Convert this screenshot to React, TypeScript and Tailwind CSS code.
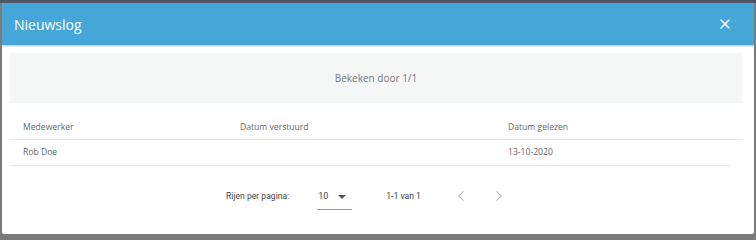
import { X, ChevronLeft, ChevronRight } from "lucide-react";

const rows = [{ name: "Rob Doe", sent: "", read: "13-10-2020" }];

export default function App() {
  return (
    <div className="w-[756px] h-[240px] bg-[#7b7b7b] flex flex-col" style={{ fontFamily: '"Open Sans", sans-serif' }}>
      <div className="h-[3px] bg-[#4b5864] shrink-0" />
      <div className="flex-1 flex pl-[2px]">
        <div className="w-[752px] h-[231px] bg-white rounded-[2px] overflow-hidden flex flex-col">
          {/* Header */}
          <div className="h-[42px] bg-[#45a6da] flex items-center justify-between pl-[12px] pr-[21px] shadow-[0_1px_2px_rgba(0,0,0,0.25)] relative z-10">
            <h2 className="text-white text-[14px]">Nieuwslog</h2>
            <X className="text-white w-[16px] h-[16px]" strokeWidth={2.2} />
          </div>

          <div className="px-[8px] pt-[8px]">
            <div className="h-[50px] w-[732px] bg-[#f5f6f6] flex items-center justify-center text-[10px] text-[#777b7e]">
              Bekeken door 1/1
            </div>

            {/* Table */}
            <div className="w-[732px] text-[8.6px] text-[#666]">
              <div className="grid grid-cols-[217px_268px_1fr] h-[37px] items-center pt-[12px] border-b border-[#e4e4e4] pl-[13px]">
                <span>Medewerker</span>
                <span>Datum verstuurd</span>
                <span>Datum gelezen</span>
              </div>
              {rows.map((r, i) => (
                <div key={i} className="grid grid-cols-[217px_268px_1fr] h-[26px] items-center border-b border-[#e4e4e4] w-[720px] pl-[13px]">
                  <span>{r.name}</span>
                  <span>{r.sent}</span>
                  <span>{r.read}</span>
                </div>
              ))}
            </div>
          </div>

          {/* Pagination */}
          <div className="flex items-center h-[60px] pl-[224px] text-[8.6px] text-[#444]" style={{ fontFamily: "Roboto, sans-serif" }}>
            <span>Rijen per pagina:</span>
            <div className="ml-[28px] w-[35px] h-[24px] flex items-center justify-between border-b border-[#999] mt-[3px] text-[9px]">
              <span className="pl-[1px]">10</span>
              <svg width="10" height="10" viewBox="0 0 10 10" className="mr-[5px]">
                <path d="M1 3 L9 3 L5 7 Z" fill="#555" />
              </svg>
            </div>
            <span className="ml-[34px]">1-1 van 1</span>
            <ChevronLeft className="ml-[31px] w-[18px] h-[18px] text-[#b5b5b5]" strokeWidth={1.4} />
            <ChevronRight className="ml-[20px] w-[18px] h-[18px] text-[#b5b5b5]" strokeWidth={1.4} />
          </div>
        </div>
      </div>
    </div>
  );
}
